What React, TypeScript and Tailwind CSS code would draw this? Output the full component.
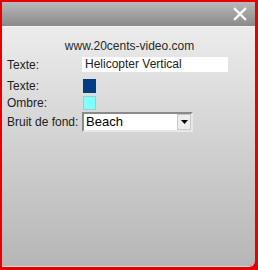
import { memo } from 'react';

// Dialog "20cents-video" - titre personnalisé
const Row = ({ label, children }: { label: string; children: React.ReactNode }) => (
  <div className="flex items-center">
    <span className="w-[74px] shrink-0 whitespace-nowrap">{label}</span>
    {children}
  </div>
);

const App = memo(() => {
  return (
    <div className="w-[258px] h-[270px] bg-[#e60000] pl-[2px] pr-[3px] pt-[2px] pb-[3px] font-['Liberation_Sans',Arial,sans-serif] text-[12px] leading-[14px] text-[#222]">
      <div className="flex flex-col h-full rounded-br-[6px] overflow-hidden border-b border-[#d8d8d8]">
        <div className="h-[24px] shrink-0 flex items-center justify-end pr-[8px] bg-gradient-to-b from-[#b9b9b9] to-[#8a8a8a]">
          <svg width="14" height="14" viewBox="0 0 14 14">
            <path d="M2 2 L12 12 M12 2 L2 12" stroke="#fff" strokeWidth="2.4" strokeLinecap="square" />
          </svg>
        </div>
        <div className="flex-1 flex flex-col border-t border-[#f4f4f4] bg-gradient-to-b from-[#ececec] to-[#b6b6b6] px-[5px] pt-[12px]">
          <div className="text-center text-[#2a2a2a] pl-[2px]">www.20cents-video.com</div>
          <div className="flex flex-col mt-[4px]">
            <Row label="Texte:">
              <div className="w-[146px] h-[15px] bg-white leading-[15px] pl-[3px] ml-[1px]">Helicopter Vertical</div>
            </Row>
            <div className="mt-[7px]">
              <Row label="Texte:">
                <div className="w-[13px] h-[14px] bg-[#003d82] ml-[2px]" />
              </Row>
            </div>
            <div className="mt-[3px]">
              <Row label="Ombre:">
                <div className="w-[13px] h-[14px] bg-[#80ffff] ml-[2px] border border-[#9bcfcf]" />
              </Row>
            </div>
            <div className="mt-[2px]">
              <Row label="Bruit de fond:">
                <div className="w-[111px] h-[20px] ml-[1px] flex items-stretch bg-white border-2 border-t-[#8a8a8a] border-l-[#8a8a8a] border-r-[#e8e8e8] border-b-[#e8e8e8]">
                  <span className="flex-1 pl-[2px] leading-[16px] text-[13px] text-black">Beach</span>
                  <span className="w-[14px] flex items-center justify-center bg-[#ededed] border border-[#c8c8c8]">
                    <svg width="7" height="4" viewBox="0 0 7 4"><path d="M0 0 H7 L3.5 4 Z" fill="#000" /></svg>
                  </span>
                </div>
              </Row>
            </div>
          </div>
        </div>
      </div>
    </div>
  );
});

App.displayName = 'App';
export default App;
